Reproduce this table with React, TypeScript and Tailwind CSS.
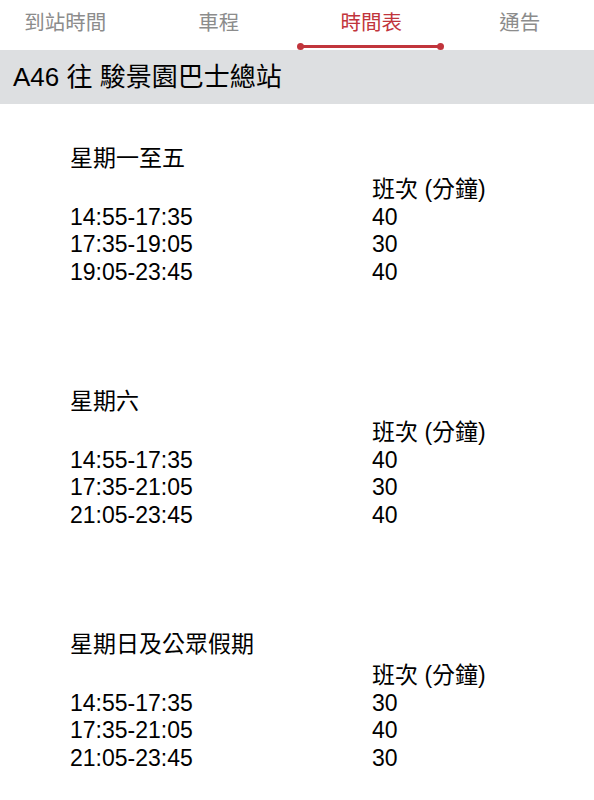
const tabs = ['到站時間', '車程', '時間表', '通告'];

const schedules = [
  {
    day: '星期一至五',
    rows: [
      ['14:55-17:35', '40'],
      ['17:35-19:05', '30'],
      ['19:05-23:45', '40'],
    ],
  },
  {
    day: '星期六',
    rows: [
      ['14:55-17:35', '40'],
      ['17:35-21:05', '30'],
      ['21:05-23:45', '40'],
    ],
  },
  {
    day: '星期日及公眾假期',
    rows: [
      ['14:55-17:35', '30'],
      ['17:35-21:05', '40'],
      ['21:05-23:45', '30'],
    ],
  },
];

function Tabs() {
  return (
    <div className="grid grid-cols-4 h-[50px] bg-white">
      {tabs.map((t, i) => {
        const active = i === 2;
        return (
          <div key={t} className={`relative flex items-start justify-center pt-[9px] ${i === 0 ? 'pr-[18px]' : ''} ${i === 1 ? 'pr-[8px]' : ''}`}>
            <span className={`text-[20.5px] leading-[28px] ${active ? 'text-[#c1353c]' : 'text-[#8c8c8c]'}`}>{t}</span>
            {active && (
              <div className="absolute left-[0px] right-[2px] top-[43px] flex items-center">
                <div className="w-[7px] h-[7px] rounded-full bg-[#c1353c]" />
                <div className="flex-1 h-[3px] bg-[#c1353c] -mx-[2px]" />
                <div className="w-[7px] h-[7px] rounded-full bg-[#c1353c]" />
              </div>
            )}
          </div>
        );
      })}
    </div>
  );
}

export default function App() {
  return (
    <div className="w-[594px] h-[800px] bg-white overflow-hidden text-black" style={{ fontFamily: '"Liberation Sans", "Noto Sans CJK TC", sans-serif' }}>
      <Tabs />
      <div className="h-[54px] bg-[#dddfe1] flex items-center pl-[13px]">
        <span className="text-[26px] leading-[30px]">A46 往 駿景園巴士總站</span>
      </div>
      <div className="flex flex-col gap-[101px] pt-[40px] pl-[70px]">
        {schedules.map(s => (
          <div key={s.day} className="flex flex-col text-[23px]">
            <div className="leading-[28px] mb-[4px]">{s.day}</div>
            <div className="grid grid-cols-[302px_1fr] leading-[27.5px]">
              <div />
              <div>班次 (分鐘)</div>
              {s.rows.map(([time, freq]) => (
                <div key={time} className="contents">
                  <div>{time}</div>
                  <div>{freq}</div>
                </div>
              ))}
            </div>
          </div>
        ))}
      </div>
    </div>
  );
}
